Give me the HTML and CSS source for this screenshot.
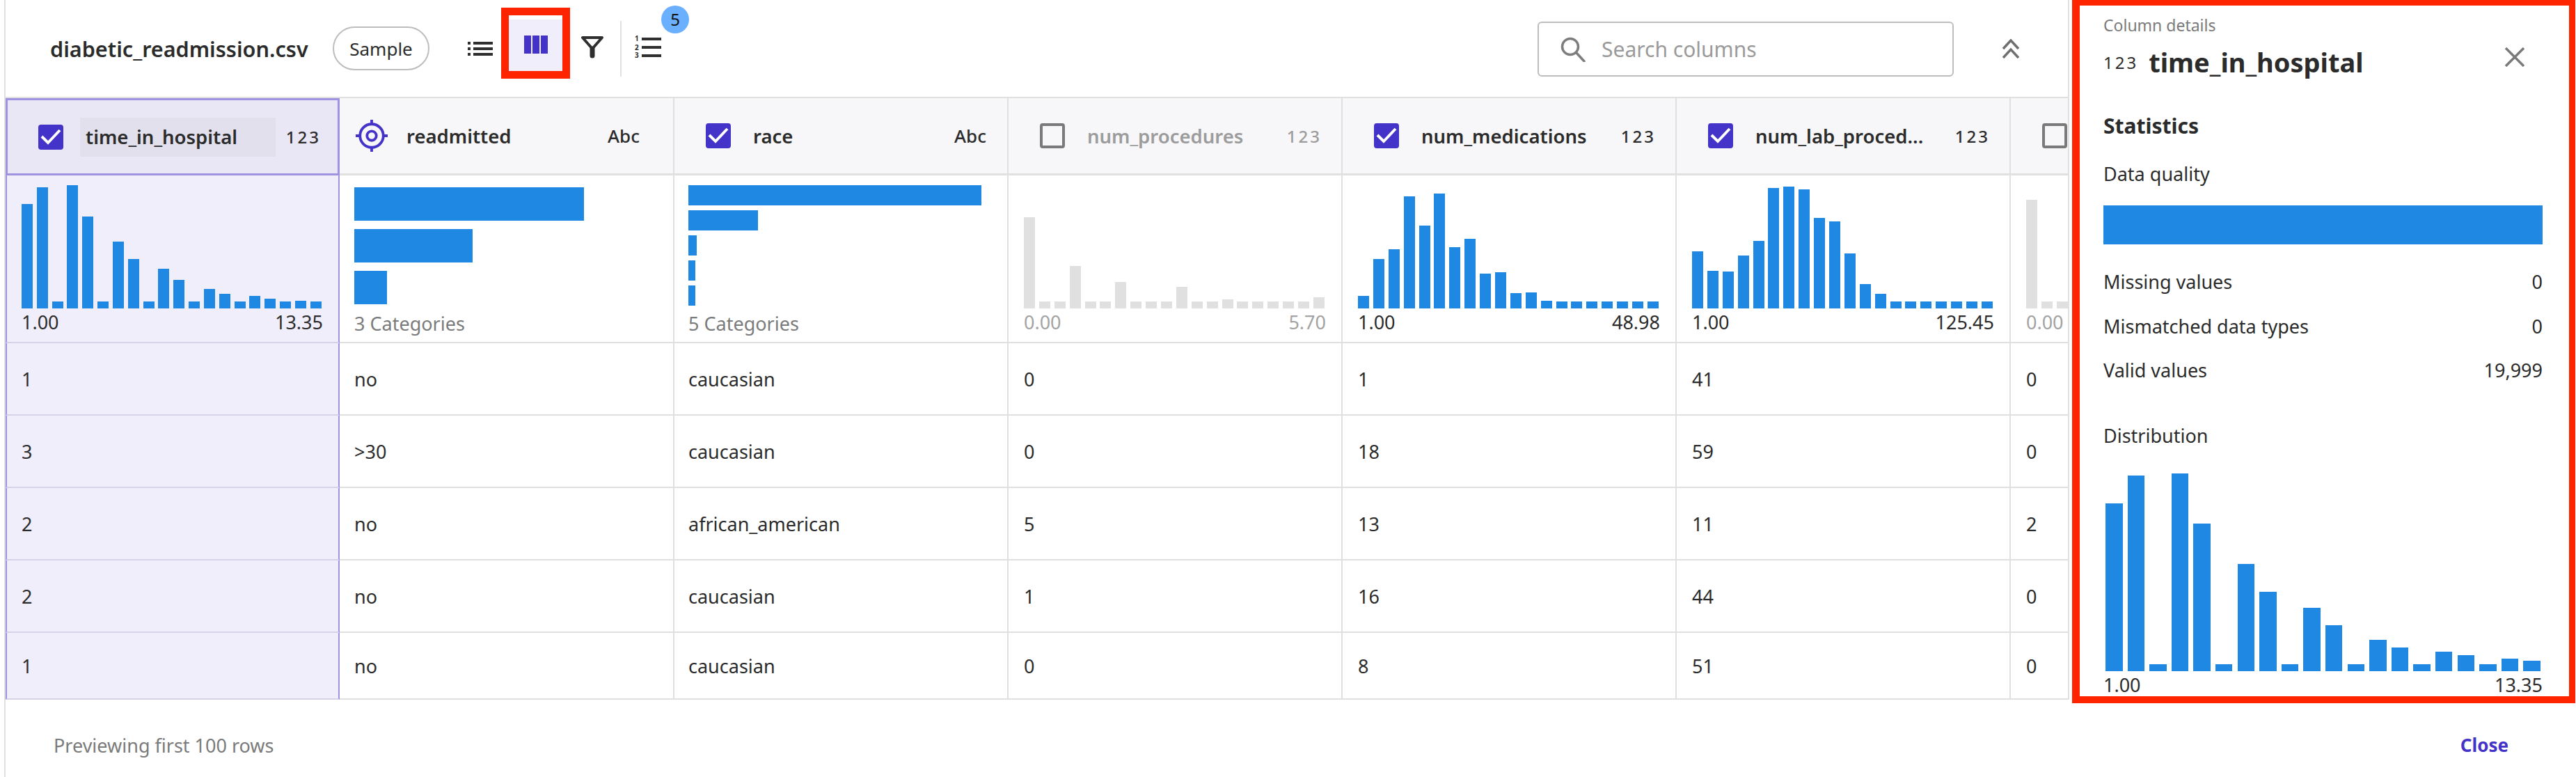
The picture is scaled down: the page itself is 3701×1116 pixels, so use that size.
FILE: index.html
```html
<!DOCTYPE html>
<html lang="en">
<head>
    <meta charset="UTF-8">
    <meta name="viewport" content="width=device-width, initial-scale=1.0">
    <title>Column details</title>
    <link rel="stylesheet" href="styles.css">
</head>
<body>
<div class="page">
    <div class="content">
        <div class="main">
            <div class="toolbar">
                <span class="file_name">diabetic_readmission.csv</span>
                <span class="pill">Sample</span>
                <svg class="icon_list" width="36" height="20" viewBox="0 0 36 20"><path fill="#2f2f2f" d="M0 0h4v4H0zM8 0h28v4H8zM0 8h4v4H0zM8 8h28v4H8zM0 16h4v4H0zM8 16h28v4H8z"/></svg>
                <div class="view_active">
                    <div class="view_fill">
                        <svg width="34" height="26" viewBox="0 0 34 26"><path fill="#4433c8" d="M0 0h10v26H0zM12 0h10v26H12zM24 0h10v26H24z"/></svg>
                    </div>
                </div>
                <svg class="icon_filter" width="32" height="32" viewBox="0 0 32 32"><path fill="none" stroke="#2f2f2f" stroke-width="4" stroke-linejoin="round" d="M2 2h28L16 18z"/><path fill="none" stroke="#2f2f2f" stroke-width="7" stroke-linecap="round" d="M16 18v10"/></svg>
                <span class="tool_sep"></span>
                <div class="order_wrap">
                    <svg width="38" height="40" viewBox="0 -4 38 40"><text x="0" y="7" class="order_num">1</text><text x="0" y="19.5" class="order_num">2</text><text x="0" y="31" class="order_num">3</text><path fill="#2f2f2f" d="M10 2h28v4H10zM10 14h28v4H10zM10 26h28v4H10z"/></svg>
                    <span class="badge">5</span>
                </div>
                <div class="search">
                    <svg width="36" height="36" viewBox="0 0 36 36"><circle cx="14" cy="14" r="11.5" fill="none" stroke="#7d7d7d" stroke-width="3.5"/><path stroke="#7d7d7d" stroke-width="3.5" stroke-linecap="round" d="M23 23l11 12"/></svg>
                    <span class="search_text">Search columns</span>
                </div>
                <svg class="icon_collapse" width="26" height="28" viewBox="0 0 26 28"><path fill="none" stroke="#6f6f6f" stroke-width="3.5" d="M2 14L13 2l11 12M2 27l11-12 11 12"/></svg>
            </div>

            <div class="table">
                <!-- header row -->
                <div class="head selected">
                    <span class="check on"><svg width="36" height="36" viewBox="0 0 36 36"><path class="tick" d="M5 17l9 9 17-18"/></svg></span>
                    <span class="col_name hl">time_in_hospital</span>
                    <span class="col_type">123</span>
                </div>
                <div class="head">
                    <svg class="target" width="46" height="46" viewBox="0 0 48 48"><circle cx="24" cy="24" r="17.5" fill="none" stroke="#4433c8" stroke-width="4"/><circle cx="24" cy="24" r="7" fill="none" stroke="#4433c8" stroke-width="4"/><path stroke="#4433c8" stroke-width="4" d="M24 0v7M24 41v7M0 24h7M41 24h7"/></svg>
                    <span class="col_name">readmitted</span>
                    <span class="col_type abc wide">Abc</span>
                </div>
                <div class="head">
                    <span class="check on"><svg width="36" height="36" viewBox="0 0 36 36"><path class="tick" d="M5 17l9 9 17-18"/></svg></span>
                    <span class="col_name">race</span>
                    <span class="col_type abc">Abc</span>
                </div>
                <div class="head off">
                    <span class="check"></span>
                    <span class="col_name">num_procedures</span>
                    <span class="col_type">123</span>
                </div>
                <div class="head">
                    <span class="check on"><svg width="36" height="36" viewBox="0 0 36 36"><path class="tick" d="M5 17l9 9 17-18"/></svg></span>
                    <span class="col_name">num_medications</span>
                    <span class="col_type">123</span>
                </div>
                <div class="head">
                    <span class="check on"><svg width="36" height="36" viewBox="0 0 36 36"><path class="tick" d="M5 17l9 9 17-18"/></svg></span>
                    <span class="col_name">num_lab_proced...</span>
                    <span class="col_type">123</span>
                </div>
                <div class="head">
                    <span class="check"></span>
                </div>

                <!-- summary charts -->
                <div class="stat selected">
                    <div class="histo">
                        <i style="height:150px"></i><i style="height:174px"></i><i style="height:10px"></i><i style="height:177px"></i><i style="height:132px"></i><i style="height:10px"></i><i style="height:96px"></i><i style="height:71px"></i><i style="height:10px"></i><i style="height:57px"></i><i style="height:41px"></i><i style="height:10px"></i><i style="height:28px"></i><i style="height:21px"></i><i style="height:10px"></i><i style="height:18px"></i><i style="height:14px"></i><i style="height:10px"></i><i style="height:11px"></i><i style="height:10px"></i>
                    </div>
                    <div class="range"><span>1.00</span><span>13.35</span></div>
                </div>
                <div class="stat">
                    <div class="cats big">
                        <i style="width:330px"></i><i style="width:170px"></i><i style="width:47px"></i>
                    </div>
                    <div class="range muted"><span>3 Categories</span></div>
                </div>
                <div class="stat">
                    <div class="cats small">
                        <i style="width:421px"></i><i style="width:100px"></i><i style="width:12px"></i><i style="width:10px"></i><i style="width:10px"></i>
                    </div>
                    <div class="range muted"><span>5 Categories</span></div>
                </div>
                <div class="stat off">
                    <div class="histo">
                        <i style="height:131px"></i><i style="height:10px"></i><i style="height:10px"></i><i style="height:61px"></i><i style="height:10px"></i><i style="height:10px"></i><i style="height:38px"></i><i style="height:10px"></i><i style="height:10px"></i><i style="height:10px"></i><i style="height:31px"></i><i style="height:10px"></i><i style="height:10px"></i><i style="height:13px"></i><i style="height:10px"></i><i style="height:10px"></i><i style="height:10px"></i><i style="height:10px"></i><i style="height:10px"></i><i style="height:16px"></i>
                    </div>
                    <div class="range"><span>0.00</span><span>5.70</span></div>
                </div>
                <div class="stat">
                    <div class="histo">
                        <i style="height:18px"></i><i style="height:71px"></i><i style="height:85px"></i><i style="height:161px"></i><i style="height:119px"></i><i style="height:165px"></i><i style="height:88px"></i><i style="height:100px"></i><i style="height:50px"></i><i style="height:52px"></i><i style="height:22px"></i><i style="height:23px"></i><i style="height:11px"></i><i style="height:10px"></i><i style="height:10px"></i><i style="height:10px"></i><i style="height:10px"></i><i style="height:10px"></i><i style="height:10px"></i><i style="height:10px"></i>
                    </div>
                    <div class="range"><span>1.00</span><span>48.98</span></div>
                </div>
                <div class="stat">
                    <div class="histo">
                        <i style="height:82px"></i><i style="height:54px"></i><i style="height:53px"></i><i style="height:76px"></i><i style="height:97px"></i><i style="height:173px"></i><i style="height:175px"></i><i style="height:171px"></i><i style="height:130px"></i><i style="height:125px"></i><i style="height:79px"></i><i style="height:35px"></i><i style="height:21px"></i><i style="height:10px"></i><i style="height:10px"></i><i style="height:10px"></i><i style="height:10px"></i><i style="height:10px"></i><i style="height:10px"></i><i style="height:10px"></i>
                    </div>
                    <div class="range"><span>1.00</span><span>125.45</span></div>
                </div>
                <div class="stat off clipped">
                    <div class="histo">
                        <i style="height:156px"></i><i style="height:10px"></i><i style="height:10px"></i>
                    </div>
                    <div class="range"><span>0.00</span></div>
                </div>

                <!-- data rows -->
                <div class="cell selected">1</div><div class="cell">no</div><div class="cell">caucasian</div><div class="cell">0</div><div class="cell">1</div><div class="cell">41</div><div class="cell">0</div>
                <div class="cell selected">3</div><div class="cell">&gt;30</div><div class="cell">caucasian</div><div class="cell">0</div><div class="cell">18</div><div class="cell">59</div><div class="cell">0</div>
                <div class="cell selected">2</div><div class="cell">no</div><div class="cell">african_american</div><div class="cell">5</div><div class="cell">13</div><div class="cell">11</div><div class="cell">2</div>
                <div class="cell selected">2</div><div class="cell">no</div><div class="cell">caucasian</div><div class="cell">1</div><div class="cell">16</div><div class="cell">44</div><div class="cell">0</div>
                <div class="cell selected">1</div><div class="cell">no</div><div class="cell">caucasian</div><div class="cell">0</div><div class="cell">8</div><div class="cell">51</div><div class="cell">0</div>
            </div>
        </div>

        <div class="panel">
            <div class="panel_label">Column details</div>
            <div class="panel_title">
                <span class="panel_type">123</span>
                <span class="panel_name">time_in_hospital</span>
                <svg class="panel_close" width="28" height="28" viewBox="0 0 28 28"><path stroke="#7a7a7a" stroke-width="3.5" d="M1 1l26 26M27 1L1 27"/></svg>
            </div>
            <div class="panel_heading">Statistics</div>
            <div class="panel_sub">Data quality</div>
            <div class="quality_bar"></div>
            <div class="panel_rows">
                <div class="panel_row"><span>Missing values</span><span>0</span></div>
                <div class="panel_row"><span>Mismatched data types</span><span>0</span></div>
                <div class="panel_row"><span>Valid values</span><span>19,999</span></div>
            </div>
            <div class="panel_sub dist">Distribution</div>
            <div class="panel_histo">
                <i style="height:241px"></i><i style="height:281px"></i><i style="height:10px"></i><i style="height:284px"></i><i style="height:212px"></i><i style="height:10px"></i><i style="height:154px"></i><i style="height:114px"></i><i style="height:10px"></i><i style="height:91px"></i><i style="height:66px"></i><i style="height:10px"></i><i style="height:45px"></i><i style="height:34px"></i><i style="height:10px"></i><i style="height:28px"></i><i style="height:23px"></i><i style="height:10px"></i><i style="height:18px"></i><i style="height:15px"></i>
            </div>
            <div class="panel_range"><span>1.00</span><span>13.35</span></div>
        </div>
    </div>

    <div class="footer">
        <span class="footer_note">Previewing first 100 rows</span>
        <span class="footer_close">Close</span>
    </div>
</div>
</body>
</html>
```

FILE: styles.css
```css
* {
    box-sizing: border-box;
}
body {
    font-family: "Noto Sans", Arial, sans-serif;
    margin: 0;
    padding: 0 0 0 6px;
    width: 3701px;
    height: 1116px;
    overflow: hidden;
    background-color: #fff;
    color: #2b2b2b;
}
.page {
    width: 3695px;
    height: 1116px;
    border-left: 2px solid #e0e0e0;
}
.content {
    display: flex;
    gap: 4px;
    height: 1010px;
}
.main {
    width: 2965px;
    height: 1005px;
    border-right: 2px solid #e0e0e0;
}

/* toolbar */
.toolbar {
    display: flex;
    align-items: center;
    height: 139px;
    padding-left: 64px;
}
.file_name {
    width: 406px;
    font-size: 30.6px;
    font-weight: 600;
}
.pill {
    display: flex;
    align-items: center;
    justify-content: center;
    width: 139px;
    height: 63px;
    border: 2px solid #bdbdbd;
    border-radius: 32px;
    font-size: 26px;
}
.icon_list {
    margin-left: 55px;
}
.view_active {
    width: 99px;
    height: 102px;
    margin: 0 0 15px 12px;
    padding-top: 6px;
    border: 11px solid #ff2400;
    background-color: #fff;
}
.view_fill {
    display: flex;
    align-items: center;
    justify-content: center;
    height: 100%;
    padding-bottom: 2px;
    background-color: #f0eefb;
}
.icon_filter {
    margin: 0 0 4px 16px;
}
.tool_sep {
    width: 2px;
    height: 80px;
    margin: 0 0 -1px 24px;
    background-color: #e0e0e0;
}
.order_wrap {
    position: relative;
    display: flex;
    margin: 0 0 4px 19px;
}
.order_num {
    font-size: 10px;
    font-weight: 700;
    fill: #2f2f2f;
}
.badge {
    position: absolute;
    left: 38px;
    top: -40px;
    display: flex;
    align-items: center;
    justify-content: center;
    width: 40px;
    height: 40px;
    border-radius: 50%;
    background-color: #6ab0ff;
    color: #111;
    font-size: 24px;
}
.search {
    display: flex;
    align-items: center;
    width: 598px;
    height: 79px;
    margin: 0 0 -2px 1259px;
    padding-left: 31px;
    border: 2px solid #bdbdbd;
    border-radius: 6px;
}
.search_text {
    margin-left: 23px;
    font-size: 30px;
    color: #9a9a9a;
}
.icon_collapse {
    margin: 0 0 0 69px;
}

/* table */
.table {
    display: grid;
    grid-template-columns: 480px 481px 480px 480px 480px 480px 82px;
    grid-template-rows: 111px 241px 104px 104px 104px 104px 96px;
    border-top: 2px solid #e0e0e0;
    height: 866px;
    overflow: hidden;
}
.head {
    display: flex;
    align-items: center;
    padding: 0 28px 0 45px;
    border-right: 2px solid #e0e0e0;
    border-bottom: 3px solid #e0e0e0;
    background-color: #f7f7f9;
}
.head:nth-child(7) {
    border-right: none;
}
.head.selected {
    padding-left: 47px;
    padding-right: 27px;
    outline: 3px solid #9d93e0;
    outline-offset: -3px;
    border: none;
    background-color: #e9e7f5;
}
.check {
    flex: none;
    width: 36px;
    height: 36px;
    border: 4px solid #7a7a7a;
    border-radius: 4px;
}
.check.on {
    border: none;
    background-color: #4433c8;
}
.check svg {
    display: block;
}
.tick {
    fill: none;
    stroke: #fff;
    stroke-width: 4;
}
.target {
    flex: none;
    margin-left: -22px;
}
.col_name {
    flex: 1;
    margin-left: 32px;
    font-size: 27.5px;
    font-weight: 600;
    white-space: nowrap;
}
.target + .col_name {
    margin-left: 27px;
}
.col_name.hl {
    margin-left: 24px;
    margin-right: 15px;
    padding: 12px 8px;
    line-height: 32px;
    background-color: #e1e0ec;
}
.col_type {
    font-size: 24px;
    font-weight: 500;
    letter-spacing: 3px;
}
.col_type.abc {
    margin-right: 2px;
    font-size: 26px;
    letter-spacing: 0;
}
.col_type.wide {
    margin-right: 20px;
}
.head.off .col_name,
.head.off .col_type {
    color: #9c9c9c;
}

.stat {
    padding: 0 24px 0 22px;
    border-right: 2px solid #e0e0e0;
    border-bottom: 2px solid #e0e0e0;
}
.histo {
    display: flex;
    align-items: flex-end;
    justify-content: space-between;
    height: 191px;
}
.histo i {
    width: 16px;
    background-color: #1e88e2;
}
.stat.off .histo i {
    background-color: #e0e0e0;
}
.stat.clipped {
    border-right: none;
    padding-right: 0;
}
.stat.clipped .histo {
    width: 60px;
    gap: 6px;
    overflow: hidden;
    justify-content: flex-start;
}
.stat.clipped .histo i {
    flex: none;
}
.cats {
    display: flex;
    flex-direction: column;
    height: 191px;
}
.cats i {
    display: block;
    background-color: #1e88e2;
}
.cats.big {
    gap: 12px;
    padding-top: 17px;
}
.cats.big i {
    height: 48px;
}
.cats.small {
    gap: 7px;
    padding-top: 14px;
}
.cats.small i {
    height: 29px;
}
.range {
    display: flex;
    justify-content: space-between;
    margin-right: -2px;
    font-size: 27px;
    line-height: 40px;
}
.range.muted {
    padding-top: 2px;
    color: #7b7b7b;
}
.stat.off .range {
    color: #a3a3a3;
}
.cell {
    display: flex;
    align-items: center;
    padding-left: 22px;
    border-right: 2px solid #e0e0e0;
    border-bottom: 2px solid #e0e0e0;
    font-size: 27px;
}
.cell:nth-child(7n) {
    border-right: none;
}
.stat:nth-child(7n+2),
.cell:nth-child(7n+2) {
    padding-left: 21px;
}
.stat:nth-child(7n+3),
.cell:nth-child(7n+3) {
    padding-left: 20px;
}
.stat.selected,
.cell.selected {
    padding-left: 21px;
    background-color: #f0eefb;
    border-left: 2px solid #9d93e0;
    border-right-color: #9d93e0;
    border-bottom-color: #d5d3e6;
}

/* right panel */
.panel {
    width: 723px;
    height: 1010px;
    padding: 13px 38px 0 34px;
    border-style: solid;
    border-color: #ff2400;
    border-width: 8px 9px 10px 11px;
    overflow: hidden;
}
.panel_label {
    font-size: 23px;
    line-height: 30px;
    color: #7b7b7b;
}
.panel_title {
    display: flex;
    align-items: center;
    height: 50px;
    margin-top: 13px;
}
.panel_type {
    font-size: 24px;
    letter-spacing: 3px;
}
.panel_name {
    flex: 1;
    margin-left: 15px;
    font-size: 38px;
    font-weight: 700;
}
.panel_close {
    margin: -14px 26px 0 0;
}
.panel_heading {
    margin-top: 47px;
    font-size: 30px;
    font-weight: 700;
    line-height: 40px;
}
.panel_sub {
    margin-top: 29px;
    font-size: 27px;
    line-height: 40px;
}
.quality_bar {
    height: 56px;
    margin-top: 25px;
    background-color: #1e88e2;
}
.panel_rows {
    display: flex;
    flex-direction: column;
    gap: 23.5px;
    margin-top: 34px;
}
.panel_row {
    display: flex;
    justify-content: space-between;
    font-size: 27px;
    line-height: 40px;
}
.panel_sub.dist {
    margin-top: 54px;
}
.panel_histo {
    display: flex;
    align-items: flex-end;
    justify-content: space-between;
    height: 318px;
    padding: 0 3px;
}
.panel_histo i {
    width: 24.5px;
    background-color: #1e88e2;
}
.panel_range {
    display: flex;
    justify-content: space-between;
    margin-top: 4px;
    font-size: 27px;
    line-height: 32px;
}

/* footer */
.footer {
    display: flex;
    align-items: center;
    justify-content: space-between;
    height: 106px;
    padding: 14px 97px 0 69px;
}
.footer_note {
    font-size: 27px;
    color: #7b7b7b;
}
.footer_close {
    font-size: 26px;
    font-weight: 700;
    color: #4433c8;
}
```
